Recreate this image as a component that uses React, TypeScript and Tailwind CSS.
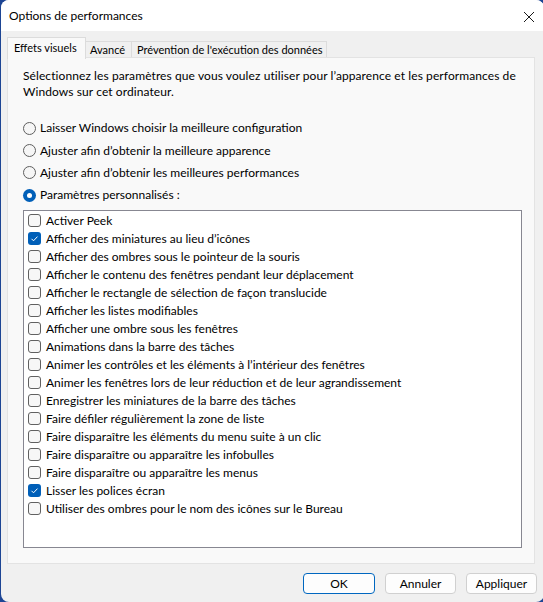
import React from "react";

const items: { label: string; checked: boolean }[] = [
  { label: "Activer Peek", checked: false },
  { label: "Afficher des miniatures au lieu d’icônes", checked: true },
  { label: "Afficher des ombres sous le pointeur de la souris", checked: false },
  { label: "Afficher le contenu des fenêtres pendant leur déplacement", checked: false },
  { label: "Afficher le rectangle de sélection de façon translucide", checked: false },
  { label: "Afficher les listes modifiables", checked: false },
  { label: "Afficher une ombre sous les fenêtres", checked: false },
  { label: "Animations dans la barre des tâches", checked: false },
  { label: "Animer les contrôles et les éléments à l’intérieur des fenêtres", checked: false },
  { label: "Animer les fenêtres lors de leur réduction et de leur agrandissement", checked: false },
  { label: "Enregistrer les miniatures de la barre des tâches", checked: false },
  { label: "Faire défiler régulièrement la zone de liste", checked: false },
  { label: "Faire disparaître les éléments du menu suite à un clic", checked: false },
  { label: "Faire disparaître ou apparaître les infobulles", checked: false },
  { label: "Faire disparaître ou apparaître les menus", checked: false },
  { label: "Lisser les polices écran", checked: true },
  { label: "Utiliser des ombres pour le nom des icônes sur le Bureau", checked: false },
];

const radios: { label: string; checked: boolean }[] = [
  { label: "Laisser Windows choisir la meilleure configuration", checked: false },
  { label: "Ajuster afin d’obtenir la meilleure apparence", checked: false },
  { label: "Ajuster afin d’obtenir les meilleures performances", checked: false },
  { label: "Paramètres personnalisés :", checked: true },
];

function Radio({ checked }: { checked: boolean }) {
  if (checked) {
    return (
      <span className="w-[13px] h-[13px] rounded-full bg-[#005fb8] flex items-center justify-center shrink-0">
        <span className="w-[5px] h-[5px] rounded-full bg-white" />
      </span>
    );
  }
  return <span className="w-[13px] h-[13px] rounded-full border border-[#5f5f5f] bg-[#f6f6f6] shrink-0" />;
}

function Check({ checked }: { checked: boolean }) {
  if (checked) {
    return (
      <span className="w-[13px] h-[13px] rounded-[3px] bg-[#005fb8] flex items-center justify-center shrink-0">
        <svg width="13" height="13" viewBox="0 0 13 13">
          <path d="M3.5 6.8 L5.5 8.8 L9.5 4.6" fill="none" stroke="white" strokeWidth="1" />
        </svg>
      </span>
    );
  }
  return <span className="w-[13px] h-[13px] rounded-[3px] border border-[#616161] bg-[#f7f7f7] shrink-0" />;
}

export default function App() {
  return (
    <div
      className="w-[543px] h-[602px] bg-[#1d4594] overflow-hidden text-[12px] text-black"
      style={{ fontFamily: 'Lato, "Noto Sans", sans-serif' }}
    >
      <div className="ml-[1px] w-[543px] h-[602px] rounded-[8px] overflow-hidden bg-[#f0f0f0] flex flex-col">
        {/* Title bar */}
        <div className="h-[31px] bg-white flex items-center justify-between pl-[8px] pr-[8px] shrink-0">
          <span className="leading-none">Options de performances</span>
          <svg width="12" height="12" viewBox="0 0 12 12" className="mr-[1px] mt-[2px]">
            <path d="M1 1 L11 11 M11 1 L1 11" stroke="#1a1a1a" strokeWidth="1" />
          </svg>
        </div>

        {/* Tabs */}
        <div className="pt-[6px] pl-[6px] flex items-end h-[28px] shrink-0 text-[11px]">
          <div className="relative z-10 h-[22px] w-[79px] pl-[6px] bg-[#f9f9f9] border border-b-0 border-[#dcdcdc] flex items-center">
            Effets visuels
          </div>
          <div className="h-[17px] w-[46px] mb-[1px] pl-[4px] bg-[#f0f0f0] border border-l-0 border-b-0 border-[#dcdcdc] flex items-center">
            Avancé
          </div>
          <div className="h-[17px] w-[195px] mb-[1px] pl-[5px] bg-[#f0f0f0] border border-l-0 border-b-0 border-[#dcdcdc] flex items-center">
            Prévention de l'exécution des données
          </div>
        </div>

        {/* Panel */}
        <div className="-mt-[2px] ml-[6px] w-[528px] h-[507px] bg-[#f9f9f9] border border-[#e3e3e3] pl-[15px] pr-[12px] pt-[10px] flex flex-col shrink-0">
          <p className="leading-[16px] tracking-[0.09px]">
            Sélectionnez les paramètres que vous voulez utiliser pour l’apparence et les performances de
            Windows sur cet ordinateur.
          </p>
          <div className="mt-[17px] flex flex-col">
            {radios.map((r) => (
              <div key={r.label} className="h-[22.4px] flex items-center gap-[4px]">
                <Radio checked={r.checked} />
                <span>{r.label}</span>
              </div>
            ))}
          </div>
          <div className="mt-[3px] h-[338px] bg-white border border-[#878791] pt-[1px] pl-[4px] flex flex-col">
            {items.map((it) => (
              <div key={it.label} className="h-[18px] flex items-center gap-[5px] whitespace-nowrap">
                <Check checked={it.checked} />
                <span>{it.label}</span>
              </div>
            ))}
          </div>
        </div>

        {/* Buttons */}
        <div className="mt-[9px] pr-[7px] flex justify-end gap-[10px]">
          <button className="w-[72px] h-[21px] rounded-[4px] bg-[#fdfdfd] border border-[#0067c0] flex items-center justify-center">
            OK
          </button>
          <button className="w-[71px] h-[21px] rounded-[4px] bg-[#fdfdfd] border border-[#d0d0d0] flex items-center justify-center">
            Annuler
          </button>
          <button className="w-[71px] h-[21px] rounded-[4px] bg-[#fdfdfd] border border-[#d0d0d0] flex items-center justify-center">
            Appliquer
          </button>
        </div>
      </div>
    </div>
  );
}
